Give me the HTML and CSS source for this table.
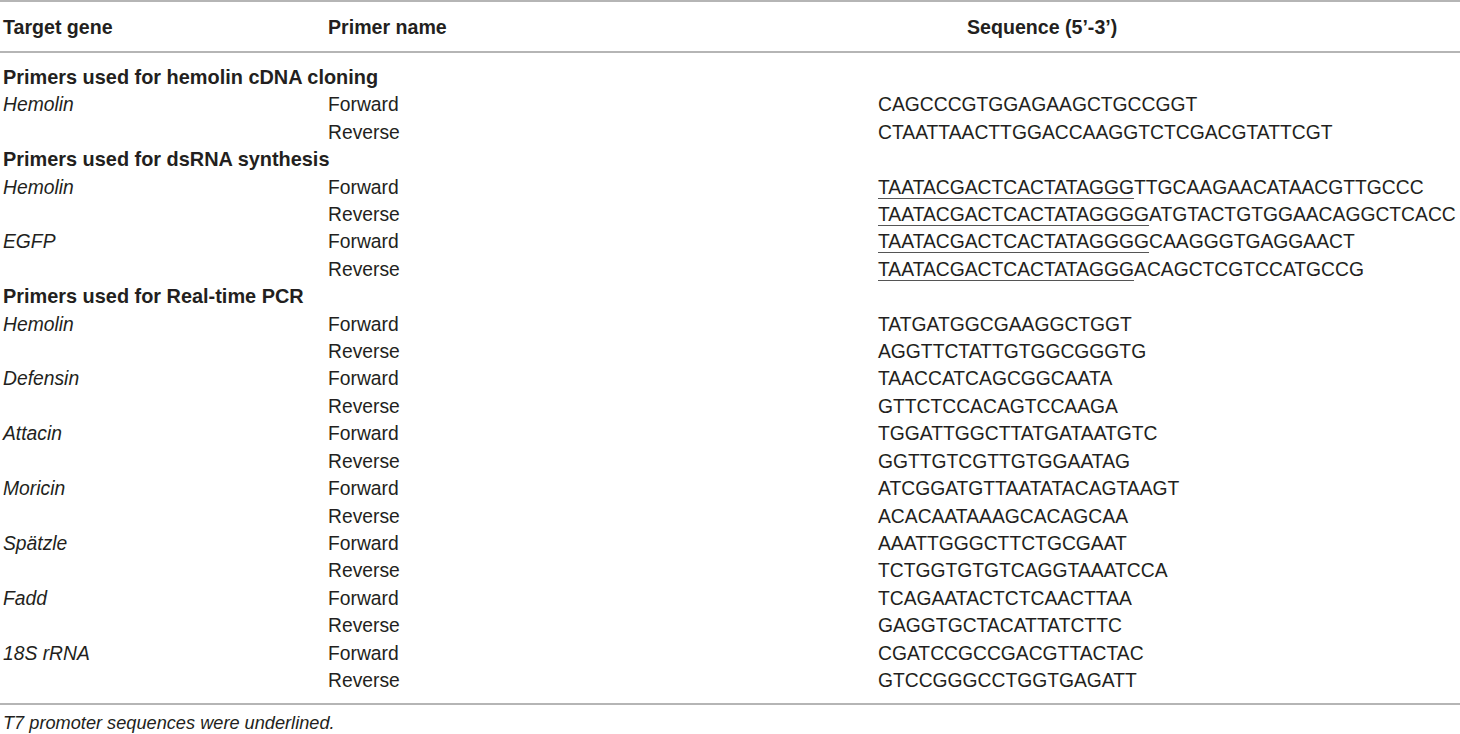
FILE: index.html
```html
<!DOCTYPE html>
<html lang="en">
<head>
<meta charset="utf-8">
<title>Primers</title>
<link rel="stylesheet" href="styles.css">
</head>
<body>
<table class="primers">
  <colgroup>
    <col class="c-gene">
    <col class="c-name">
    <col class="c-seq">
  </colgroup>
  <thead>
    <tr>
      <th class="gene">Target gene</th>
      <th class="name">Primer name</th>
      <th class="seq-head">Sequence (5’-3’)</th>
    </tr>
  </thead>
  <tbody>
    <tr class="first"><td colspan="3" class="section">Primers used for hemolin cDNA cloning</td></tr>
    <tr><td class="gene"><i>Hemolin</i></td><td>Forward</td><td>CAGCCCGTGGAGAAGCTGCCGGT</td></tr>
    <tr><td class="gene"></td><td>Reverse</td><td>CTAATTAACTTGGACCAAGGTCTCGACGTATTCGT</td></tr>
    <tr><td colspan="3" class="section">Primers used for dsRNA synthesis</td></tr>
    <tr><td class="gene"><i>Hemolin</i></td><td>Forward</td><td><u>TAATACGACTCACTATAGGG</u>TTGCAAGAACATAACGTTGCCC</td></tr>
    <tr><td class="gene"></td><td>Reverse</td><td><u>TAATACGACTCACTATAGGGG</u>ATGTACTGTGGAACAGGCTCACC</td></tr>
    <tr><td class="gene"><i>EGFP</i></td><td>Forward</td><td><u>TAATACGACTCACTATAGGGG</u>CAAGGGTGAGGAACT</td></tr>
    <tr><td class="gene"></td><td>Reverse</td><td><u>TAATACGACTCACTATAGGG</u>ACAGCTCGTCCATGCCG</td></tr>
    <tr><td colspan="3" class="section">Primers used for Real-time PCR</td></tr>
    <tr><td class="gene"><i>Hemolin</i></td><td>Forward</td><td>TATGATGGCGAAGGCTGGT</td></tr>
    <tr><td class="gene"></td><td>Reverse</td><td>AGGTTCTATTGTGGCGGGTG</td></tr>
    <tr><td class="gene"><i>Defensin</i></td><td>Forward</td><td>TAACCATCAGCGGCAATA</td></tr>
    <tr><td class="gene"></td><td>Reverse</td><td>GTTCTCCACAGTCCAAGA</td></tr>
    <tr><td class="gene"><i>Attacin</i></td><td>Forward</td><td>TGGATTGGCTTATGATAATGTC</td></tr>
    <tr><td class="gene"></td><td>Reverse</td><td>GGTTGTCGTTGTGGAATAG</td></tr>
    <tr><td class="gene"><i>Moricin</i></td><td>Forward</td><td>ATCGGATGTTAATATACAGTAAGT</td></tr>
    <tr><td class="gene"></td><td>Reverse</td><td>ACACAATAAAGCACAGCAA</td></tr>
    <tr><td class="gene"><i>Spätzle</i></td><td>Forward</td><td>AAATTGGGCTTCTGCGAAT</td></tr>
    <tr><td class="gene"></td><td>Reverse</td><td>TCTGGTGTGTCAGGTAAATCCA</td></tr>
    <tr><td class="gene"><i>Fadd</i></td><td>Forward</td><td>TCAGAATACTCTCAACTTAA</td></tr>
    <tr><td class="gene"></td><td>Reverse</td><td>GAGGTGCTACATTATCTTC</td></tr>
    <tr><td class="gene"><i>18S rRNA</i></td><td>Forward</td><td>CGATCCGCCGACGTTACTAC</td></tr>
    <tr class="last"><td class="gene"></td><td>Reverse</td><td>GTCCGGGCCTGGTGAGATT</td></tr>
  </tbody>
</table>
<p class="note">T7 promoter sequences were underlined.</p>
</body>
</html>
```

FILE: styles.css
```css
html, body {
  margin: 0;
  padding: 0;
  background: #ffffff;
}

body {
  font-family: "Liberation Sans", Arial, Helvetica, sans-serif;
  color: #231f20;
  font-size: 19.3px;
}

.primers {
  width: 1460px;
  border-collapse: collapse;
  table-layout: fixed;
}

.c-gene { width: 328px; }
.c-name { width: 550px; }
.c-seq { width: 582px; }

.primers th {
  font-weight: bold;
  font-size: 19.6px;
  text-align: left;
  height: 49px;
  padding: 0;
  border-top: 2px solid #b5b5b5;
  border-bottom: 2px solid #b5b5b5;
  vertical-align: middle;
  line-height: 22px;
}

.primers td {
  padding: 0;
  height: 27.4px;
  line-height: 27.4px;
  white-space: nowrap;
  vertical-align: middle;
}

.primers .gene {
  padding-left: 3px;
}

.primers th.seq-head {
  padding-left: 89px;
}

.primers td.section {
  font-weight: bold;
  font-size: 19.9px;
  padding-left: 3px;
}

.primers tr.first td {
  padding-top: 11px;
}

.primers tr.last td {
  padding-bottom: 9px;
  border-bottom: 2px solid #b5b5b5;
}

.primers u {
  text-decoration: underline;
  text-decoration-color: #555;
  text-decoration-thickness: 1px;
  text-underline-offset: 4px;
}

.note {
  margin: 0;
  padding-left: 3px;
  font-style: italic;
  font-size: 18.2px;
  line-height: 36px;
}
```
